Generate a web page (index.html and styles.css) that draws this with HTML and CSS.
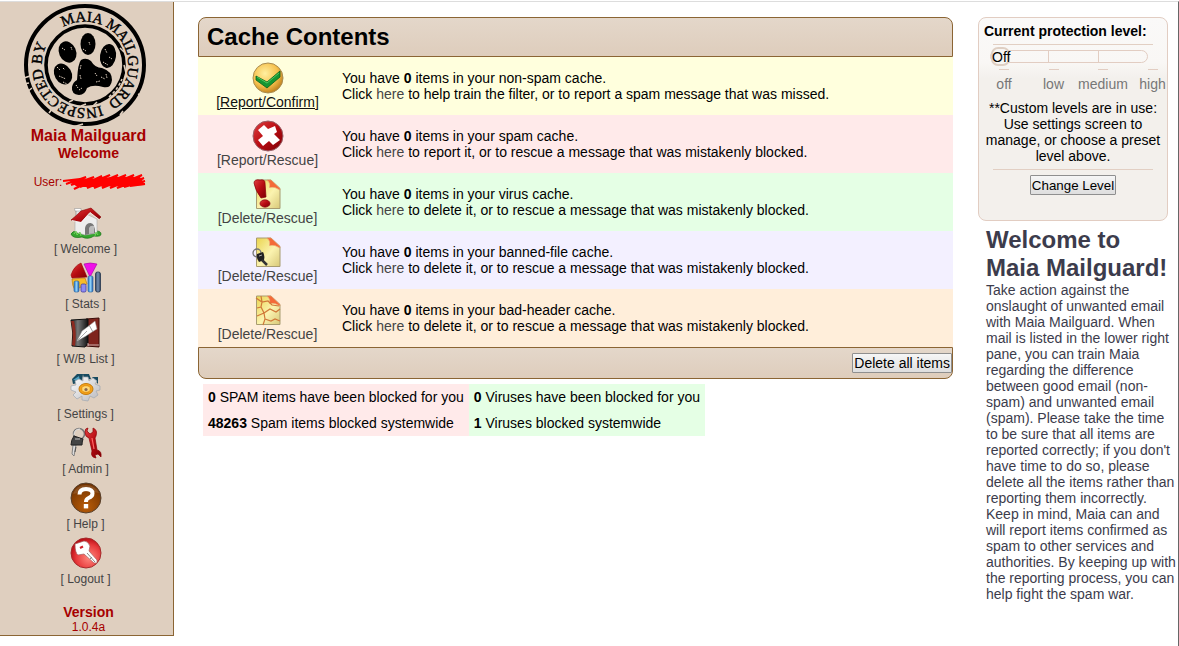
FILE: index.html
```html
<!DOCTYPE html>
<html lang="en">
<head>
<meta charset="utf-8">
<title>Maia Mailguard - Welcome</title>
<link rel="stylesheet" href="styles.css">
</head>
<body>
<svg class="defs" width="0" height="0" aria-hidden="true">
  <defs>
    <linearGradient id="red" x1="0" y1="0" x2="1" y2="1"><stop offset="0" stop-color="#e04040"/><stop offset=".5" stop-color="#b80c12"/><stop offset="1" stop-color="#7c0006"/></linearGradient>
    <radialGradient id="gold" cx=".4" cy=".35" r=".7"><stop offset="0" stop-color="#fff0a0"/><stop offset=".6" stop-color="#f6c04c"/><stop offset="1" stop-color="#b87818"/></radialGradient>
    <radialGradient id="rose" cx=".6" cy=".65" r=".65"><stop offset="0" stop-color="#ff8a80"/><stop offset=".65" stop-color="#e83a3c"/><stop offset="1" stop-color="#b80c14"/></radialGradient>
    <radialGradient id="brown" cx=".5" cy=".8" r=".8"><stop offset="0" stop-color="#b85c08"/><stop offset="1" stop-color="#6e3000"/></radialGradient>
    <linearGradient id="paper" x1="0" y1="0" x2="1" y2="1"><stop offset="0" stop-color="#ead44e"/><stop offset=".55" stop-color="#fbf3b0"/><stop offset="1" stop-color="#d8c878"/></linearGradient>
    <linearGradient id="blue" x1="0" y1="0" x2="1" y2="0"><stop offset="0" stop-color="#2c78c8"/><stop offset=".5" stop-color="#8cd0f8"/><stop offset="1" stop-color="#2864b0"/></linearGradient>
    <linearGradient id="steel" x1="0" y1="0" x2="1" y2="0"><stop offset="0" stop-color="#344a68"/><stop offset=".5" stop-color="#7890b0"/><stop offset="1" stop-color="#2c405c"/></linearGradient>
    <linearGradient id="silver" x1="0" y1="0" x2="1" y2="1"><stop offset="0" stop-color="#ffffff"/><stop offset="1" stop-color="#b8b8bc"/></linearGradient>
    <linearGradient id="black" x1="0" y1="0" x2="1" y2="0"><stop offset="0" stop-color="#181818"/><stop offset=".4" stop-color="#777"/><stop offset="1" stop-color="#111"/></linearGradient>
    <symbol id="sheet" viewBox="0 0 32 32">
      <path d="M4.500 2H19L28 10.500V30.500H4.500Z" fill="url(#paper)" stroke="#a89c70"/>
      <path d="M15 2H19L28 10.500V12Q22 8 17.500 9.500Q19 5 15 2Z" fill="#f46a38" stroke="#e8a070" stroke-width=".6"/>
    </symbol>
  </defs>
</svg>
<div class="page">
  <nav class="sidebar">
    <svg class="stamp" viewBox="0 0 124 124" role="img" aria-label="Inspected by Maia Mailguard">
      <defs>
        <path id="ring" d="M40.300 24.300A43.500 43.500 0 0 1 83.700 99.700A43.500 43.500 0 0 1 40.300 24.300"/>
      </defs>
      <g fill="none" stroke="#000">
        <circle cx="62" cy="62" r="59" stroke-width="4"/>
        <circle cx="62" cy="62" r="39" stroke-width="3.600"/>
      </g>
      <g fill="none" stroke="#dfcfbf">
        <path d="M1 75L7 73M0 81L6 80M4 89L9 85M26 110L29 106M50 124L60 121M97 112L100 108M115 91L120 93" stroke-width="1.600"/>
        <path d="M86 94Q95 86 99 76" stroke-width="1.500" stroke-dasharray="3 2"/>
        <path d="M46 99L50 97M58 103L63 101M70 103L74 99M97 45L101 49M101 62L103 70" stroke-width="1.500"/>
      </g>
      <text class="stamp-text"><textPath href="#ring">MAIA MAILGUARD&#160;&#160;INSPECTED BY</textPath></text>
      <g>
        <ellipse cx="44.500" cy="49" rx="8.500" ry="11" transform="rotate(-24 44.500 49)"/>
        <ellipse cx="65" cy="41" rx="7.500" ry="11"/>
        <ellipse cx="85" cy="53" rx="8" ry="12" transform="rotate(8 85 53)"/>
        <ellipse cx="40" cy="71" rx="8.500" ry="11" transform="rotate(-30 40 71)"/>
        <path d="M58 57Q63 54 68 58Q72 65 79 65Q89 68 89 77Q88 86 80 84Q70 81 64 85Q62 92 56 92Q48 91 49 84Q50 79 54 77Q55 60 58 57Z"/>
      </g>
      <path d="M34 64l3 3M40 65l2 2M36 73l7 3M40 79l4 2M82 46l2 4M86 54l3 2M80 59l5 3M39 45l3 2M48 44l1 3M66 39l1 3M60 46l3 2M53 82l2 3M56 87l3-2M72 70l2 3M78 74l4 2M83 71l1 4M73 79l4-1M58 62l-1 5M57 72l1 4" stroke="#dfcfbf" stroke-width="1" fill="none" stroke-dasharray="1.500 1"/>
    </svg>
    <h1 class="brand">Maia Mailguard</h1>
    <h2 class="section">Welcome</h2>
    <p class="user">User:<svg class="redacted" viewBox="0 0 84 18" role="img" aria-label="redacted"><path d="M1 8L18 6L4 11L24 4L9 12L32 4L12 16L40 3L18 14L48 2L25 15L56 2L32 15L64 2L40 15L72 2L48 15L80 2L55 15L82 5L62 14L83 8L68 13L83 11L20 13L60 5L14 8L76 6L30 10L80 9" fill="none" stroke="#f00" stroke-width="2"/><path d="M14 7L32 6L50 4L78 4L80 7L83 12L60 13L36 13L14 13L10 10Z" fill="#f00"/></svg></p>
    <ul class="menu">
      <li><a href="#"><svg class="icon" viewBox="0 0 32 32">
        <path d="M1 27Q3 23 7 25L26 24Q31 24 31 27Q31 30 24 29Q18 33 12 30Q3 32 1 27Z" fill="#35a52e" stroke="#197318" stroke-width=".7"/>
        <path d="M5 12L14 6L27 12V26L15 28L5 25Z" fill="#eee" stroke="#aaa" stroke-width=".6"/>
        <path d="M15 28V21Q16 16 20.500 16Q25 16 25 26Z" fill="#777"/><path d="M19 27V21Q20 18 24 19V26Z" fill="#bbb"/>
        <path d="M6 3H11L10 12L6 11Z" fill="#e8e8e8" stroke="#888" stroke-width=".7"/><path d="M4.500 1.500H11V4H5Z" fill="#fff" stroke="#888" stroke-width=".5"/>
        <path d="M11 4L21 1L31 10L29 12L20 5L11 15L1 13Q6 9 11 4Z" fill="url(#red)" stroke="#800" stroke-width=".6"/>
        <path d="M2 13.500L11 15.500L20 5.500L29 12.500" stroke="#fff" stroke-width=".8" fill="none"/><path d="M4 27l2-3 1 4 3-3 1 4M25 29l1-4 2 3" stroke="#74d45a" fill="none"/>
      </svg><span>[ Welcome ]</span></a></li>
      <li><a href="#"><svg class="icon" viewBox="0 0 32 32">
        <path d="M2 17L15 16L17 22L5 28Q2 24 2 17Z" fill="#f8bc28" stroke="#c08010" stroke-width=".7"/>
        <path d="M1 13Q4 4 11 1L17 15L2 16Z" fill="url(#red)" stroke="#900" stroke-width=".6"/>
        <path d="M14 2Q20 0 27 2L20 15Z" fill="#f010e8" stroke="#a000a0" stroke-width=".6"/>
        <rect x="4" y="19" width="5" height="11" rx="1.500" fill="url(#blue)" stroke="#205898" stroke-width=".6"/>
        <rect x="11" y="22" width="5" height="8" rx="1.500" fill="#8d8af4" stroke="#423c98" stroke-width=".8"/>
        <rect x="18" y="14" width="5" height="16" rx="1.500" fill="url(#blue)" stroke="#205898" stroke-width=".6"/>
        <rect x="25.500" y="10" width="5" height="20" rx="2" fill="url(#steel)" stroke="#24364c" stroke-width=".8"/>
      </svg><span>[ Stats ]</span></a></li>
      <li><a href="#"><svg class="icon" viewBox="0 0 32 32">
        <path d="M16 2L29 1V30L16 29Z" fill="#7e241d" stroke="#3c0c08"/>
        <path d="M1 3L18 2V26L15 30L2 29Q4 16 1 3Z" fill="url(#black)" stroke="#111"/>
        <path d="M1 4Q4 16 2 28L5 29Q7 16 4 4Z" fill="#8b2a20"/>
        <path d="M18 26V29M18 28H29" stroke="#eee" stroke-width=".7"/>
        <path d="M20 8L25 4L27 12L22 15L16 19L7 24L12 14Z" fill="#fff" stroke="#999" stroke-width=".5"/>
        <path d="M8 23L17 14" stroke="#888" stroke-width=".7"/><path d="M19 8L23 15" stroke="#888" stroke-width=".8"/>
      </svg><span>[ W/B List ]</span></a></li>
      <li><a href="#"><svg class="icon" viewBox="0 0 32 32">
        <path d="M2 7L7 2L13 2L12 10L3 12ZM13 2L19 2L21 7L14 8ZM22 5L28 5L28 12Z" fill="#174a60"/><path d="M3 8L9 4L10 9Z" fill="#4ea0c0"/>
        <path d="M13 5L18 5L19 9L23 6L27 9L25 12L30 14L30 18L26 19L28 23L24 26L20 24L18 29L12 28L12 24L7 27L3 23L6 20L1 18L1 14L6 13L5 9L9 7L13 9Z" fill="url(#silver)" stroke="#a0a8b0" stroke-width=".7"/>
        <ellipse cx="16" cy="17" rx="7" ry="5.500" fill="#f5a218" stroke="#c47c10"/>
        <ellipse cx="16" cy="17" rx="4.300" ry="3.300" fill="#ffd878" stroke="#d88408" stroke-width=".7"/><circle cx="16" cy="17.500" r="1.600" fill="#8a6a50"/>
      </svg><span>[ Settings ]</span></a></li>
      <li><a href="#"><svg class="icon" viewBox="0 0 32 32">
        <circle cx="9" cy="7" r="5.500" fill="none" stroke="#777" stroke-width="1.500"/><path d="M4 8Q4 2 10 2" stroke="#eee" fill="none"/>
        <path d="M6 18L4 29L2 27L3 18Z" fill="#ddd" stroke="#777" stroke-width=".9"/><path d="M6 20L5 25" stroke="#555"/>
        <path d="M4 9L13 12Q12 15 12 18L1 18Q1 13 4 9Z" fill="#444" stroke="#222"/><path d="M5 12h5" stroke="#999" stroke-width="1.500"/>
        <path d="M15 5Q15 1 18 1L17 4L20 7L23 5L23 1Q28 3 26 9L25 11L27 23Q32 24 31 30L28 27L25 28L26 31Q20 30 22 24L19 11Q15 10 15 5Z" fill="url(#red)" stroke="#8c0004" stroke-width=".7"/>
        <path d="M22 11L24 22" stroke="#ff6868" stroke-width="1.200"/>
      </svg><span>[ Admin ]</span></a></li>
      <li><a href="#"><svg class="icon" viewBox="0 0 32 32">
        <circle cx="16" cy="16" r="15" fill="url(#brown)" stroke="#57402c"/><path d="M3 12Q6 3 16 3Q25 3 29 11Q16 8 3 12Z" fill="#fff" opacity=".12"/>
        <path d="M9.500 12.500Q9.500 7 16 7Q22.500 7 22.500 11.500Q22.500 14.500 18.500 16Q16 17 16 20" fill="none" stroke="#fff" stroke-width="4"/><rect x="13.800" y="22" width="4.400" height="4.400" fill="#fff"/>
      </svg><span>[ Help ]</span></a></li>
      <li><a href="#"><svg class="icon" viewBox="0 0 32 32">
        <circle cx="16" cy="16" r="15" fill="url(#rose)" stroke="#a52b2c"/>
        <path d="M5 7L14 4Q18 4 20 9L19 14L27 23L27 26L24 26L14 17L8 18Q5 16 5 7Z" fill="#fff" stroke="#a56060" stroke-width=".7"/>
        <path d="M10 11L13 9.500" stroke="#d02028" stroke-width="2"/><path d="M17 16L25 25M20 22l2-2" stroke="#888"/>
      </svg><span>[ Logout ]</span></a></li>
    </ul>
    <p class="version"><strong>Version</strong>1.0.4a</p>
  </nav>

  <main class="content">
    <section class="cache">
      <h2 class="cache-head">Cache Contents</h2>
      <div class="row ham">
        <a class="action" href="#"><svg class="icon" viewBox="0 0 32 32">
          <circle cx="16" cy="16" r="15" fill="url(#gold)" stroke="#a98c50"/>
          <path d="M4 14L15 20L28 9V15L15 26L4 18Z" fill="#159632" stroke="#06601a" stroke-width=".8"/><path d="M5 15L15 21L27 11" fill="none" stroke="#5cd468" stroke-width=".8"/>
        </svg><span>[Report/Confirm]</span></a>
        <p>You have <b>0</b> items in your non-spam cache.<br>Click <a href="#">here</a> to help train the filter, or to report a spam message that was missed.</p>
      </div>
      <div class="row spam">
        <a class="action" href="#"><svg class="icon" viewBox="0 0 32 32">
          <circle cx="16" cy="16" r="15" fill="url(#red)" stroke="#99636a"/>
          <path d="M6 10L12 5L16 9L23 6L25 12L22 14L28 20L21 25L17 21L11 26L6 20L11 16Z" fill="#fff"/>
        </svg><span>[Report/Rescue]</span></a>
        <p>You have <b>0</b> items in your spam cache.<br>Click <a href="#">here</a> to report it, or to rescue a message that was mistakenly blocked.</p>
      </div>
      <div class="row virus">
        <a class="action" href="#"><svg class="icon" viewBox="0 0 32 32">
          <use href="#sheet"/>
          <path d="M2 5Q2 1 8 2Q13 1 13 5L14 19L9 20Q3 12 2 5Z" fill="url(#red)" stroke="#850008" stroke-width=".7"/><ellipse cx="13" cy="25.500" rx="5" ry="3.700" fill="url(#red)" stroke="#850008" stroke-width=".7"/>
        </svg><span>[Delete/Rescue]</span></a>
        <p>You have <b>0</b> items in your virus cache.<br>Click <a href="#">here</a> to delete it, or to rescue a message that was mistakenly blocked.</p>
      </div>
      <div class="row banned">
        <a class="action" href="#"><svg class="icon" viewBox="0 0 32 32">
          <use href="#sheet"/>
          <circle cx="5" cy="17" r="4" fill="none" stroke="#777" stroke-width="1.300"/><path d="M5 18L11 16Q13 20 12 24L7 26Q4 22 5 18Z" fill="#222"/><path d="M10 24L15 29" stroke="#333" stroke-width="2.500"/><path d="M7 20l3-1" stroke="#aaa"/>
        </svg><span>[Delete/Rescue]</span></a>
        <p>You have <b>0</b> items in your banned-file cache.<br>Click <a href="#">here</a> to delete it, or to rescue a message that was mistakenly blocked.</p>
      </div>
      <div class="row header">
        <a class="action" href="#"><svg class="icon" viewBox="0 0 32 32">
          <use href="#sheet"/>
          <path d="M9 2L10 8L9 13L12 19L13 25L11 31M4 4L10 8L16 7L20 11L27 12M5 14L9 13M12 19L18 15L24 18L28 15M12 19L5 22M13 25L19 27L23 25L28 27" fill="none" stroke="#d07838" stroke-width="1.200"/>
        </svg><span>[Delete/Rescue]</span></a>
        <p>You have <b>0</b> items in your bad-header cache.<br>Click <a href="#">here</a> to delete it, or to rescue a message that was mistakenly blocked.</p>
      </div>
      <div class="cache-foot"><button type="button" class="delete-all">Delete all items</button></div>
    </section>
    <table class="totals">
      <tr><td class="spam"><b>0</b> SPAM items have been blocked for you</td><td class="virus"><b>0</b> Viruses have been blocked for you</td></tr>
      <tr><td class="spam"><b>48263</b> Spam items blocked systemwide</td><td class="virus"><b>1</b> Viruses blocked systemwide</td></tr>
    </table>
  </main>

  <aside class="side">
    <form class="panel">
      <label class="panel-title" for="level">Current protection level:</label>
      <div class="slider">
        <input id="level" type="range" min="0" max="3" value="0">
        <output class="level-name" for="level">Off</output>
      </div>
      <div class="levels"><span>off</span><span>low</span><span>medium</span><span>high</span></div>
      <p class="note">**Custom levels are in use: Use settings screen to manage, or choose a preset level above.</p>
      <button type="button" class="change">Change Level</button>
    </form>
    <section class="intro">
      <h2>Welcome to Maia Mailguard!</h2>
      <p>Take action against the onslaught of unwanted email with Maia Mailguard. When mail is listed in the lower right pane, you can train Maia regarding the difference between good email (non-spam) and unwanted email (spam). Please take the time to be sure that all items are reported correctly; if you don't have time to do so, please delete all the items rather than reporting them incorrectly. Keep in mind, Maia can and will report items confirmed as spam to other services and authorities. By keeping up with the reporting process, you can help fight the spam war.</p>
    </section>
  </aside>
</div>
</body>
</html>
```
FILE: styles.css
```css
* { box-sizing: border-box; }
body {
  margin: 0;
  padding-top: 1px;
  background: #fff;
  color: #000;
  font: 14px/16px "Liberation Sans", Arial, sans-serif;
}
h1, h2, p, ul { margin: 0; padding: 0; }
a { color: #444; text-decoration: none; }
button, input { font-family: inherit; }
.defs { position: absolute; }
.page {
  display: flex;
  align-items: flex-start;
  min-height: calc(100vh - 1px);
  border-top: 1px solid #ddd;
  border-right: 1px solid #666;
}

.sidebar {
  flex: 0 0 174px;
  padding-top: 1px;
  background: #dfcfbf;
  border: solid #8b6534;
  border-width: 0 1px 1px 0;
  color: #a60000;
  text-align: center;
}
.stamp { display: block; width: 124px; height: 124px; margin: 0 0 0 23px; }
.stamp-text { font: 15px "Liberation Serif", serif; stroke: #000; stroke-width: .4px; }
.brand { padding-left: 4px; font-size: 16px; line-height: 18px; }
.section { padding-left: 4px; font-size: 14px; line-height: 17px; }
.user {
  display: flex;
  justify-content: center;
  align-items: center;
  height: 18px;
  margin: 11px 0 16px;
  padding-left: 7px;
  font-size: 12px;
}
.redacted { width: 84px; height: 18px; }
.menu { list-style: none; padding-right: 2px; font-size: 12px; line-height: 15px; }
.menu li { height: 55px; }
.menu a { display: block; }
.icon { display: block; width: 32px; height: 32px; margin: 0 auto; }
.menu .icon { margin-bottom: 3px; }
.version { padding: 13px 0 0 4px; font-size: 12px; line-height: 15px; }
.version strong { display: block; font-size: 14px; }

.content { flex: 1; min-width: 0; margin: 15px 25px 0 24px; }
.cache-head, .cache-foot {
  border: 1px solid #8b6534;
  background: linear-gradient(#e4d7ca, #decdbc);
}
.cache-head {
  padding: 4px 8px;
  border-radius: 8px 8px 0 0;
  font-size: 24px;
  line-height: 30px;
}
.cache-foot {
  display: flex;
  justify-content: flex-end;
  padding: 5px 0;
  border-radius: 0 0 8px 8px;
}
.row { display: grid; grid-template-columns: 139px 1fr; gap: 5px; height: 58px; align-items: center; }
.action { text-align: center; }
.action span { display: block; }
.ham .action span { color: #111; text-decoration: underline; }
.ham { background: #ffffdd; }
.spam { background: #ffeaea; }
.virus { background: #e5ffe5; }
.banned { background: #f3f0ff; }
.header { background: #ffeeda; }
.delete-all, .change {
  padding: 0 1px;
  border: 1px solid #8f8f8f;
  border-radius: 1px;
  background: linear-gradient(#f6f6f6, #dedede);
  color: #000;
}
.delete-all { height: 20px; font-size: 14px; }
.totals { margin: 5px 0 0 5px; border-collapse: collapse; }
.totals td { padding: 5px; }

.side { flex: 0 0 200px; margin-top: 15px; }
.panel {
  width: 190px;
  height: 204px;
  padding: 5px;
  border: 1px solid #e2cdc2;
  border-radius: 8px;
  background: linear-gradient(#faf9f8, #f9f7f5 22%, #f3f0ec 30%);
  text-align: center;
}
.panel-title { display: block; text-align: left; font-weight: bold; line-height: 17px; }
.slider { position: relative; margin: 4px 9px 5px; padding: 5px 0 0; height: 20px; border-top: 1px solid #e2cfc3; }
.slider input {
  -webkit-appearance: none;
  appearance: none;
  display: block;
  width: 158px;
  height: 13px;
  margin: 0 0 0 -3px;
  border: 1px solid #e2cdc2;
  border-radius: 8px;
  background:
    linear-gradient(#e2cdc2, #e2cdc2) 57px 50% / 1px 11px no-repeat,
    linear-gradient(#e2cdc2, #e2cdc2) 107px 50% / 1px 11px no-repeat;
}
.slider input::-webkit-slider-thumb {
  -webkit-appearance: none;
  width: 19px;
  height: 19px;
  border: 2px solid #dfcfc3;
  border-radius: 7px;
  background: #f8f6f3;
}
.level-name { position: absolute; top: 4px; left: -1px; pointer-events: none; }
.levels {
  display: grid;
  grid-template-columns: 50px 49px 50px 49px;
  margin: 0 -14px 8px -5px;
  color: #777;
}
.levels span::before {
  content: "";
  display: block;
  width: 10px;
  margin: 0 auto 6px;
  border-top: 1px solid #e2cdc2;
}
.note { margin: 0 -1px 5px; }
.note::after { content: ""; display: block; margin: 5px 10px 0; border-top: 1px solid #e2cfc3; }
.change { display: block; height: 20px; margin: 0 auto; }

.intro { padding: 5px 0 0 8px; color: #3c3c4c; }
.intro h2 { font-size: 24px; line-height: 28px; }
```
